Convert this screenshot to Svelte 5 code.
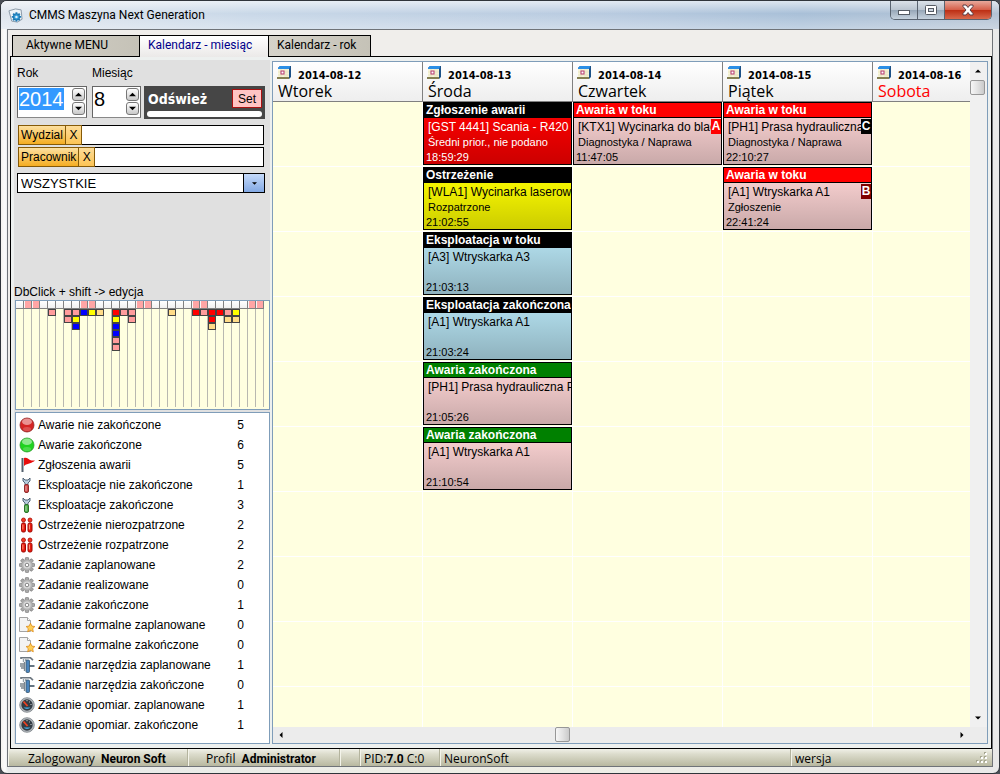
<script>
  import { onMount } from 'svelte';

  let yearBox;
  let year = $state('2014');
  let month = $state('8');

  onMount(() => {
    yearBox.focus();
    yearBox.select();
  });

  const tabs = ['Aktywne MENU', 'Kalendarz - miesiąc', 'Kalendarz - rok'];

  const filters = [
    { id: 'wydzial', label: 'Wydzial' },
    { id: 'pracownik', label: 'Pracownik' }
  ];

  const monthDays = Array.from({ length: 31 }, (_, i) => i);
  const weekend = [1, 2, 8, 9, 15, 16, 22, 23, 29, 30];
  const stacks = {
    4: 'p', 6: 'pp', 7: 'pyb', 8: 'b', 9: 'y', 10: 'o', 12: 'rybbpp', 13: 'p', 14: 'pp',
    19: 'o', 22: 'r', 23: 'p', 24: 'rro', 25: 'r', 26: 'po', 27: 'yo'
  };

  const legend = [
    { icon: 'red', label: 'Awarie nie zakończone', count: 5 },
    { icon: 'green', label: 'Awarie zakończone', count: 6 },
    { icon: 'flag', label: 'Zgłoszenia awarii', count: 5 },
    { icon: 'wrenchRed', label: 'Eksploatacje nie zakończone', count: 1 },
    { icon: 'wrenchGreen', label: 'Eksploatacje zakończone', count: 3 },
    { icon: 'alert', label: 'Ostrzeżenie nierozpatrzone', count: 2 },
    { icon: 'alert', label: 'Ostrzeżenie rozpatrzone', count: 2 },
    { icon: 'gear', label: 'Zadanie zaplanowane', count: 2 },
    { icon: 'gear', label: 'Zadanie realizowane', count: 0 },
    { icon: 'gear', label: 'Zadanie zakończone', count: 1 },
    { icon: 'doc', label: 'Zadanie formalne zaplanowane', count: 0 },
    { icon: 'doc', label: 'Zadanie formalne zakończone', count: 0 },
    { icon: 'tool', label: 'Zadanie narzędzia zaplanowane', count: 1 },
    { icon: 'tool', label: 'Zadanie narzędzia zakończone', count: 0 },
    { icon: 'gauge', label: 'Zadanie opomiar. zaplanowane', count: 1 },
    { icon: 'gauge', label: 'Zadanie opomiar. zakończone', count: 1 }
  ];

  const days = [
    { date: '2014-08-12', name: 'Wtorek', events: [] },
    {
      date: '2014-08-13',
      name: 'Środa',
      events: [
        { head: 'black', body: 'red', title: 'Zgłoszenie awarii', text: '[GST 4441] Scania - R420', note: 'Średni prior., nie podano', time: '18:59:29' },
        { head: 'black', body: 'yellow', title: 'Ostrzeżenie', text: '[WLA1] Wycinarka laserowa', note: 'Rozpatrzone', time: '21:02:55' },
        { head: 'black', body: 'blue', title: 'Eksploatacja w toku', text: '[A3] Wtryskarka A3', note: '', time: '21:03:13' },
        { head: 'black', body: 'blue', title: 'Eksploatacja zakończona', text: '[A1] Wtryskarka A1', note: '', time: '21:03:24' },
        { head: 'green', body: 'pink', title: 'Awaria zakończona', text: '[PH1] Prasa hydrauliczna P', note: '', time: '21:05:26' },
        { head: 'green', body: 'pink', title: 'Awaria zakończona', text: '[A1] Wtryskarka A1', note: '', time: '21:10:54' }
      ]
    },
    {
      date: '2014-08-14',
      name: 'Czwartek',
      events: [
        { head: 'bright', body: 'pink', title: 'Awaria w toku', text: '[KTX1] Wycinarka do blach', note: 'Diagnostyka / Naprawa', time: '11:47:05', badge: 'A' }
      ]
    },
    {
      date: '2014-08-15',
      name: 'Piątek',
      events: [
        { head: 'bright', body: 'pink', title: 'Awaria w toku', text: '[PH1] Prasa hydrauliczna', note: 'Diagnostyka / Naprawa', time: '22:10:27', badge: 'C' },
        { head: 'bright', body: 'pink', title: 'Awaria w toku', text: '[A1] Wtryskarka A1', note: 'Zgłoszenie', time: '22:41:24', badge: 'B' }
      ]
    },
    { date: '2014-08-16', name: 'Sobota', free: true, events: [] }
  ];
  const rows = Array.from({ length: 10 }, (_, i) => i);
  const teeth = [0, 45, 90, 135, 180, 225, 270, 315];
</script>

{#snippet wrench(light, dark)}
  <path d="M4 1v3l2 2v2h3V6l2-2V1L9 3H6z" fill="#b9cddd" stroke="#44586c" stroke-width=".9" />
  <rect x="5.500" y="7.500" width="4" height="8" rx="1.500" fill={light} stroke={dark} />
  <path d="M7 9v5" stroke="#fff" stroke-opacity=".5" />
{/snippet}

{#snippet picture(kind)}
  <svg class="icon" viewBox="0 0 16 16" aria-hidden="true">
    {#if kind === 'red' || kind === 'green'}
      <circle cx="8" cy="8" r="7" fill={kind === 'red' ? '#d42424' : '#1fd31f'} stroke={kind === 'red' ? '#8f2525' : '#2c9a2c'} stroke-width=".8" />
      <ellipse cx="8" cy="4.800" rx="5" ry="3.200" fill="#fff" opacity=".5" />
      <ellipse cx="8" cy="12" rx="4" ry="2" fill="#fff" opacity=".2" />
    {:else if kind === 'flag'}
      <path d="M3.500 1v14" stroke="#53606e" stroke-width="2" />
      <path d="M5 1c3-1 4 1 6 2 1.500.6 3 .7 5 .5-1.500 1.500-3 1.800-5 2.800-2 1-4 .7-6 2.700z" fill="#e80d0d" />
    {:else if kind === 'wrenchRed'}
      {@render wrench('#d24b4b', '#902a2a')}
    {:else if kind === 'wrenchGreen'}
      {@render wrench('#4fae4b', '#2a7229')}
    {:else if kind === 'alert'}
      {#each [4.500, 11] as x}
        <circle cx={x} cy="3" r="2" fill="#f03a22" stroke="#a80a05" stroke-width=".8" />
        <rect x={x - 2} y="6" width="4" height="9" rx="1.500" fill="#e81c10" stroke="#9c0803" />
        <path d="M{x - .6} 7.500v5" stroke="#ff9d80" />
      {/each}
    {:else if kind === 'gear'}
      {#each teeth as a}
        <rect x="6.400" y=".4" width="3.200" height="4" rx=".8" fill="#aaa" stroke="#777" stroke-width=".7" transform="rotate({a} 8 8)" />
      {/each}
      <circle cx="8" cy="8" r="5.400" fill="#b8b8b8" stroke="#999" stroke-width=".5" />
      <circle cx="8" cy="8" r="3.500" fill="#dcdcdc" />
      <circle cx="8" cy="8" r="1.800" fill="#fff" stroke="#777" stroke-width=".9" />
    {:else if kind === 'doc'}
      <path d="M.5.500h8l3 3v11H.5z" fill="#f3f3f3" stroke="#a3a3a3" />
      <path d="M8.500.500v3h3" fill="#fff" stroke="#a3a3a3" />
      <path d="m11.500 6.200 1.400 2.900 3 .4-2.200 2.200.6 3.100-2.800-1.500-2.800 1.500.6-3.100-2.200-2.200 3-.4z" fill="#ffcf57" stroke="#dc8a1c" stroke-width=".8" />
    {:else if kind === 'tool'}
      <path d="M2 2V.8h9.500L14 3.200" fill="none" stroke="#6d7780" stroke-width="1.600" />
      <path d="M4.500 2v3M6.800 2v2" stroke="#98a2aa" stroke-width="1.400" />
      <path d="M1 7h5M1 9h5M2 11h4M5.500 5v9" stroke="#7b858d" stroke-width="1.300" />
      <path d="M10 9h5.500" stroke="#647481" stroke-width="2" />
      <rect x="7" y="3" width="3.500" height="12.500" rx="1" fill="#4a84bd" stroke="#35566f" stroke-width=".8" />
    {:else if kind === 'gauge'}
      <circle cx="8" cy="8" r="7.300" fill="#b4babf" stroke="#7a8085" stroke-width=".8" />
      <circle cx="8" cy="8" r="5.700" fill="#343c44" />
      <path d="M4.500 10.500h7a4.500 4 0 0 1-7 0z" fill="#45aee8" />
      <path d="m4.500 4.500 4 4.500" stroke="#f2401f" stroke-width="1.800" />
      <path d="M8 3v1.200M11 4.500l-.8.8M12.500 7.500h-1" stroke="#ddd" stroke-width=".9" />
    {/if}
  </svg>
{/snippet}

{#snippet arrow(dir)}
  <svg class="arrow" viewBox="0 0 8 8" aria-hidden="true">
    {#if dir === 'up'}<path d="M0 6h8L4 2z" />
    {:else if dir === 'down'}<path d="M0 2h8L4 6z" />
    {:else if dir === 'left'}<path d="M6 0v8L2 4z" />
    {:else}<path d="M2 0v8l4-4z" />{/if}
  </svg>
{/snippet}

<div class="window">
  <header class="titlebar">
    <svg class="logo" viewBox="0 0 16 16" aria-hidden="true">
      <path d="M1 3 8 1l6 1 1 10-5 3-6-1z" fill="#eef3f7" stroke="#8796a5" />
      {#each teeth as a}
        <path d="M9 4.500v2" stroke="#1c7fbd" stroke-width="2" transform="rotate({a} 9 9.500)" />
      {/each}
      <circle cx="9" cy="9.500" r="3.400" fill="#2f9ad6" stroke="#1c6fa6" />
      <circle cx="9" cy="9.500" r="1.300" fill="#d9f0ff" />
    </svg>
    <h1>CMMS Maszyna Next Generation</h1>
    <div class="controls">
      <button class="min" aria-label="Minimalizuj">
        <svg viewBox="0 0 14 12"><rect x="1.500" y="6.500" width="11" height="4" fill="#fff" stroke="#555b63" /></svg>
      </button>
      <button class="max" aria-label="Maksymalizuj">
        <svg viewBox="0 0 14 12"><rect x="1.500" y="1.500" width="11" height="9" rx="1" fill="#fff" stroke="#555b63" /><rect x="4.500" y="4.500" width="5" height="3" fill="#ccd5df" stroke="#555b63" /></svg>
      </button>
      <button class="close" aria-label="Zamknij">
        <svg viewBox="0 0 14 12"><path d="M2 1h3l2 2.500L9 1h3v1.500L9 6l3 3.500V11H9L7 8.500 5 11H2V9.500L5 6 2 2.500z" fill="#fff" stroke="#5a3d45" /></svg>
      </button>
    </div>
  </header>

  <div class="frame">
    <nav class="tabs">
      {#each tabs as tab, i}
        <button class="tab" class:active={i === 1}>{tab}</button>
      {/each}
    </nav>

    <main class="panel">
      <aside>
        <div class="period">
          <div class="field year">
            <label for="year">Rok</label>
            <div class="spin">
              <input id="year" type="text" bind:value={year} bind:this={yearBox} />
              <span class="steps">
                <button aria-label="Następny rok" onclick={() => (year = String(+year + 1))}>{@render arrow('up')}</button>
                <button aria-label="Poprzedni rok" onclick={() => (year = String(+year - 1))}>{@render arrow('down')}</button>
              </span>
            </div>
          </div>
          <div class="field month">
            <label for="month">Miesiąc</label>
            <div class="spin">
              <input id="month" type="text" bind:value={month} />
              <span class="steps">
                <button aria-label="Następny miesiąc" onclick={() => (month = String(Math.min(12, +month + 1)))}>{@render arrow('up')}</button>
                <button aria-label="Poprzedni miesiąc" onclick={() => (month = String(Math.max(1, +month - 1)))}>{@render arrow('down')}</button>
              </span>
            </div>
          </div>
          <div class="refresh">
            <div class="refresh-top">
              <button class="reload">Odśwież</button>
              <button class="set">Set</button>
            </div>
            <div class="bar"></div>
          </div>
        </div>

        {#each filters as f}
          <div class="filter">
            <label for={f.id}>{f.label}</label>
            <button aria-label="Wyczyść: {f.label}">X</button>
            <input id={f.id} type="text" />
          </div>
        {/each}

        <div class="combo">
          <select aria-label="Zakres"><option>WSZYSTKIE</option></select>
          <span class="drop">{@render arrow('down')}</span>
        </div>

        <p class="hint">DbClick + shift -&gt; edycja</p>
        <div class="chart">
          {#each monthDays as d}
            <div class="day">
              <span class="cap" class:weekend={weekend.includes(d)}></span>
              <div class="stack">
                {#each (stacks[d] ?? '').split('') as c}
                  <i class={c}></i>
                {/each}
              </div>
            </div>
          {/each}
        </div>

        <ul class="legend">
          {#each legend as item}
            <li>
              {@render picture(item.icon)}
              <span>{item.label}</span>
              <b>{item.count}</b>
            </li>
          {/each}
        </ul>
      </aside>

      <section class="calendar">
        <div class="view">
          <table>
            <thead>
              <tr>
                {#each days as day}
                  <th class:free={day.free}>
                    <div class="date">
                      <svg viewBox="0 0 14 14" aria-hidden="true">
                        <path d="M1 2 3 0h11v11l-2 2H1z" fill="#1d5288" />
                        <path d="M1 3V2l2-2h10v1l-1 2z" fill="#2b8fe6" />
                        <rect x="1" y="3" width="11" height="8" fill="#f8f5d8" />
                        <path d="M1 6h11M1 9h11M4 3v8M8 3v8M10 3v8" stroke="#e0dcb8" stroke-width=".6" />
                        <rect x="4" y="5" width="3" height="3" fill="#fff" stroke="#b5376c" />
                        <rect x="0" y="11" width="12" height="2" fill="#858052" />
                      </svg>
                      <time>{day.date}</time>
                    </div>
                    <div class="name">{day.name}</div>
                  </th>
                {/each}
              </tr>
            </thead>
            <tbody>
              {#each rows as r}
                <tr>
                  {#each days as day}
                    <td>
                      {#if day.events[r]}
                        {@const e = day.events[r]}
                        <article class="card {e.body}">
                          <h2 class={e.head}>{e.title}</h2>
                          <p class="text">{e.text}</p>
                          <p class="note">{e.note}</p>
                          <p class="time">{e.time}</p>
                          {#if e.badge}<span class="badge {e.badge}">{e.badge}</span>{/if}
                        </article>
                      {/if}
                    </td>
                  {/each}
                </tr>
              {/each}
            </tbody>
          </table>
        </div>
        <div class="scroll vertical">
          <button aria-label="W górę">{@render arrow('up')}</button>
          <span class="thumb"></span>
          <span class="track"></span>
          <button aria-label="W dół">{@render arrow('down')}</button>
        </div>
        <div class="scroll horizontal">
          <button aria-label="W lewo">{@render arrow('left')}</button>
          <span class="track before"></span>
          <span class="thumb"></span>
          <span class="track after"></span>
          <button aria-label="W prawo">{@render arrow('right')}</button>
        </div>
      </section>
    </main>

    <footer>
      <div class="user">Zalogowany <b>Neuron Soft</b></div>
      <div class="profile">Profil <b>Administrator</b></div>
      <div class="blank"></div>
      <div class="pid">PID:<b>7.0</b> C:0</div>
      <div class="company">NeuronSoft</div>
      <div class="version">wersja</div>
      <svg class="grip" viewBox="0 0 12 12" aria-hidden="true">
        <path d="M8 0h2v2H8zM4 4h2v2H4zM8 4h2v2H8zM0 8h2v2H0zM4 8h2v2H4zM8 8h2v2H8z" fill="#a5a58f" />
        <path d="M9 1h2v2H9zM5 5h2v2H5zM9 5h2v2H9zM1 9h2v2H1zM5 9h2v2H5zM9 9h2v2H9z" fill="#fff" />
      </svg>
    </footer>
  </div>
</div>

<style>
  :global(body) {
    margin: 0;
    background: #4a4e55;
  }
  * {
    box-sizing: border-box;
  }
  button, input, select {
    margin: 0;
    padding: 0;
    border: 0;
    border-radius: 0;
    background: none;
    font: inherit;
    color: inherit;
    outline: none;
    min-width: 0;
  }
  h1, h2, p, ul {
    margin: 0;
    padding: 0;
    font-weight: normal;
  }
  .window {
    display: flex;
    flex-direction: column;
    height: 100vh;
    padding: 0 6px 6px;
    border: 1px solid #30353b;
    border-radius: 7px;
    background: linear-gradient(90deg, #f4f2ee, #fbfbfb 4px, #e8eaea 7px, #efefe6 50%, #e9e9e9);
    font-family: "Liberation Sans", Arial, sans-serif;
    font-size: 12px;
    color: #000;
    overflow: hidden;
  }
  .titlebar {
    display: flex;
    align-items: center;
    flex: none;
    height: 28px;
    margin: 0 -6px;
    padding: 0 7px;
    background:
      linear-gradient(180deg, rgba(255, 255, 255, .6), rgba(255, 255, 255, 0) 45%, rgba(255, 255, 255, .3)),
      linear-gradient(90deg, #dfe6ee, #c9d8e8 25%, #b9cbe0 60%, #a9c0d8 80%, #b4c3d4);
  }
  .logo {
    width: 15px;
    height: 15px;
    margin-right: 6px;
  }
  h1 {
    font: 12px Roboto, "Noto Sans", sans-serif;
  }
  .controls {
    display: flex;
    align-self: flex-start;
    margin-left: auto;
    height: 19px;
    border: 1px solid #59636f;
    border-top: 0;
    border-radius: 0 0 5px 5px;
    overflow: hidden;
  }
  .controls button {
    display: grid;
    place-items: center;
    width: 27px;
    background: linear-gradient(#dae1e8, #bac5d0 48%, #98a8b8 52%, #c6d2dd);
    border-right: 1px solid #59636f;
  }
  .controls .close {
    width: 46px;
    border: 0;
    background: linear-gradient(#e7a99c, #d5604a 48%, #bd2f15 52%, #d9694c);
  }
  .controls svg {
    width: 14px;
    height: 12px;
  }
  .frame {
    display: flex;
    flex-direction: column;
    flex: 1;
    min-height: 0;
    border: 1px solid #6f7378;
    background: #f0eeeb;
  }
  .tabs {
    display: flex;
    flex: none;
    padding: 5px 4px 0;
    height: 26px;
  }
  .tab {
    padding: 0 8px 3px;
    height: 21px;
    border: 1px solid #000;
    border-bottom: 0;
    border-left: 0;
    background: linear-gradient(90deg, #d5d2c9, #c5c2b7);
    font-family: Roboto, "Noto Sans", sans-serif;
    line-height: 16px;
    text-align: left;
    white-space: nowrap;
  }
  .tab:first-child {
    width: 128px;
    padding-left: 13px;
    border-left: 1px solid #000;
  }
  .tab:nth-child(2) {
    width: 129px;
  }
  .tab:last-child {
    width: 102px;
  }
  .tab.active {
    height: 22px;
    position: relative;
    background: linear-gradient(#fff, #ebe9e8);
    color: #00008b;
  }
  .panel {
    display: flex;
    flex: 1;
    gap: 2px;
    min-height: 0;
    margin-left: 2px;
    padding: 3px 3px 4px;
    border: 1px solid #000;
    background: #edf0ef;
  }
  aside {
    display: flex;
    flex-direction: column;
    flex: none;
    width: 256px;
    background: #e0e0e0;
  }
  .period {
    display: flex;
    align-items: flex-end;
    gap: 5px;
    padding: 5px 5px 0 3px;
    margin-bottom: 6px;
  }
  .field {
    padding-bottom: 1px;
  }
  .field label {
    display: block;
    height: 21px;
    line-height: 16px;
  }
  .spin {
    display: flex;
    height: 32px;
    padding: 1px;
    background: #fff;
    border: 1px solid #666;
    border-bottom-color: #888;
  }
  .year {
    width: 70px;
  }
  .month {
    width: 49px;
    margin-right: -2px;
  }
  .spin input {
    flex: 1;
    width: 0;
    height: 22px;
    font-size: 20px;
  }
  .spin input::selection {
    background: #39f;
    color: #fff;
  }
  .steps {
    display: flex;
    flex-direction: column;
    gap: 1px;
  }
  .steps button {
    display: grid;
    place-items: center;
    width: 13px;
    height: 13px;
    border: 1px solid #777;
    border-radius: 3px;
    background: linear-gradient(#fff, #c9c9c9);
  }
  .arrow {
    width: 7px;
    height: 7px;
  }
  .refresh {
    flex: 1;
    height: 33px;
    padding: 3px;
    background: #464646;
  }
  .refresh-top {
    display: flex;
    justify-content: space-between;
    height: 19px;
    margin-bottom: 3px;
  }
  .reload {
    padding: 0 1px;
    font: bold 14px/18px "DejaVu Sans Condensed", "DejaVu Sans", sans-serif;
    color: #fff;
  }
  .set {
    width: 30px;
    border: 1px solid #a11;
    background: #ffc4c4;
  }
  .bar {
    height: 6px;
    border-radius: 3px;
    background: #fff;
  }
  .filter {
    display: flex;
    height: 20px;
    margin: 0 6px 2px 4px;
    border: 1px solid #000;
    background: #fff;
  }
  .filter label, .filter button {
    margin: -1px 0;
    padding: 0 2px;
    border: 1px solid #855a08;
    background: linear-gradient(#fde0a0, #f5ad22);
    line-height: 18px;
  }
  .filter label {
    margin-left: -1px;
  }
  .filter button {
    width: 17px;
    margin-left: -1px;
    background: linear-gradient(#fddc98, #fcc455);
  }
  .filter input {
    flex: 1;
    padding: 0 3px;
  }
  .combo {
    display: flex;
    height: 20px;
    margin: 4px 5px 0 3px;
    border: 1px solid #000;
    background: #fff;
  }
  .combo select {
    appearance: none;
    flex: 1;
    padding: 0 3px;
    font-size: 13px;
  }
  .drop {
    display: grid;
    place-items: center;
    width: 21px;
    border-left: 1px solid #000;
    background: linear-gradient(#c5dafa, #83a9e4);
    pointer-events: none;
  }
  .drop .arrow {
    width: 5px;
  }
  .hint {
    margin-top: auto;
    line-height: 16px;
  }
  .chart {
    display: flex;
    flex: none;
    height: 110px;
    margin: 0 0 2px 1px;
    padding-bottom: 2px;
    border: 1px solid #7f9db9;
    background: #ffffe0;
  }
  .day {
    width: 8px;
    background: linear-gradient(90deg, transparent 7px, #b8b8b0 7px);
  }
  .cap {
    display: block;
    height: 8px;
    padding: 0 0 0 1px;
    border: solid #808080;
    border-width: 0 1px 1px 0;
    background: linear-gradient(#fff, #f0f0f0);
  }
  .cap.weekend {
    background: linear-gradient(#ffa5a5, #ffa5a5) content-box, #f6f6f6;
  }
  .stack i {
    display: block;
    height: 7px;
    border: 1px solid #444;
  }
  .p { background: #ff9c9c; }
  .y { background: #ff0; }
  .b { background: #00f; }
  .o { background: #ffdc88; }
  .r { background: #f00; }
  .legend {
    flex: none;
    height: 332px;
    margin-left: 1px;
    padding: 2px 25px 0 3px;
    border: 1px solid #7f9db9;
    background: #fff;
    list-style: none;
  }
  .legend li {
    display: flex;
    align-items: center;
    gap: 3px;
    height: 20px;
  }
  .legend b {
    margin-left: auto;
    font-weight: normal;
  }
  .icon {
    width: 16px;
    height: 16px;
  }
  .calendar {
    display: grid;
    flex: 1;
    grid-template: minmax(0, 1fr) 16px / minmax(0, 1fr) 17px;
    min-width: 0;
    margin-top: 1px;
    border: 1px solid #7f9db9;
    background: #ececec;
  }
  .view {
    overflow: hidden;
    background: #ffffe0;
  }
  table {
    width: 750px;
    border-spacing: 0;
    table-layout: fixed;
  }
  th {
    height: 40px;
    padding: 2px 4px 0;
    border: solid #808080;
    border-width: 0 1px 1px 0;
    background: linear-gradient(#fff, #eee);
    font-weight: normal;
    text-align: left;
    vertical-align: top;
  }
  .date {
    display: flex;
    align-items: center;
    gap: 7px;
    height: 18px;
  }
  .date svg {
    width: 14px;
    height: 14px;
    margin-bottom: 1px;
  }
  time {
    padding-top: 4px;
    font: bold 11px "DejaVu Sans Condensed", "DejaVu Sans", sans-serif;
  }
  .name {
    padding-left: 1px;
    font: 16px/18px "Open Sans", "Noto Sans", sans-serif;
  }
  .free .name {
    color: #f00;
  }
  td {
    height: 65px;
    padding: 0;
    border: solid #fff;
    border-width: 0 1px 1px 0;
    vertical-align: top;
  }
  .card {
    position: relative;
    height: 63px;
    border: 1px solid #000;
    overflow: hidden;
    white-space: nowrap;
  }
  .card h2 {
    height: 15px;
    padding-left: 2px;
    border-bottom: 1px solid #000;
    font-size: 12px;
    font-weight: bold;
    line-height: 15px;
    color: #fff;
  }
  .card h2.black { background: #000; }
  .card h2.green { background: #008000; }
  .card h2.bright { background: #f00; }
  .card.red { background: linear-gradient(#f50000 15px, #cc0000); color: #fff; }
  .card.yellow { background: linear-gradient(#f5f500 15px, #cccc00); }
  .card.blue { background: linear-gradient(#add8e6 15px, #8fb2be); }
  .card.pink { background: linear-gradient(#f3cccc 15px, #c9a9a9); }
  .text {
    height: 17px;
    padding-left: 4px;
    line-height: 18px;
  }
  .note {
    height: 14px;
    padding-left: 4px;
    font-size: 11px;
    line-height: 14px;
  }
  .time {
    padding-left: 2px;
    font-size: 11px;
    line-height: 16px;
  }
  .badge {
    position: absolute;
    top: 16px;
    right: 0;
    width: 10px;
    height: 15px;
    font-weight: bold;
    line-height: 15px;
    text-align: center;
    color: #fff;
  }
  .badge.A { background: #f00; }
  .badge.B { background: #800000; }
  .badge.C { background: #000; }
  .scroll {
    display: flex;
  }
  .scroll button {
    display: grid;
    place-items: center;
    width: 16px;
    height: 18px;
    color: #333;
  }
  .scroll .arrow {
    width: 6px;
    height: 6px;
  }
  .vertical {
    flex-direction: column;
    background: #f0f0f0;
  }
  .horizontal button {
    height: 16px;
  }
  .thumb {
    width: 15px;
    height: 15px;
    border: 1px solid #979797;
    border-radius: 2px;
    background: linear-gradient(90deg, #f6f6f6, #e2e2e2 50%, #cacaca);
  }
  .vertical .track {
    flex: 1;
  }
  .before {
    flex: 266;
  }
  .after {
    flex: 384;
  }
  footer {
    display: flex;
    flex: none;
    height: 17px;
    background: linear-gradient(#f0f0e8, #dcdccc 30%, #b8b8a0);
    padding-right: 4px;
    font-family: "Open Sans", "Noto Sans", sans-serif;
    line-height: 19px;
    white-space: pre;
    overflow: hidden;
  }
  footer div {
    padding-left: 3px;
    border-left: 1px solid #f4f4ea;
    box-shadow: -1px 0 #b4b49e;
  }
  footer .user {
    width: 180px;
    padding-left: 19px;
  }
  footer b {
    font-family: Roboto, "Noto Sans", sans-serif;
  }
  footer .user b, footer .profile b {
    margin-left: 3px;
  }
  footer .profile {
    width: 152px;
    padding-left: 17px;
  }
  footer .blank {
    width: 20px;
  }
  footer .pid {
    width: 80px;
  }
  footer .company {
    flex: 1;
  }
  footer .version {
    width: 185px;
  }
  .grip {
    width: 12px;
    height: 12px;
    margin-top: 3px;
  }
</style>
